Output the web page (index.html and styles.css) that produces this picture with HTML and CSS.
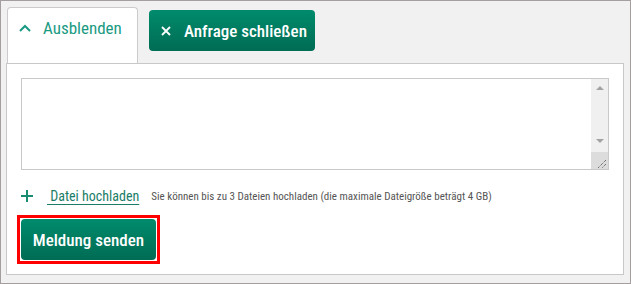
FILE: index.html
```html
<!DOCTYPE html>
<html lang="de">
<head>
  <meta charset="UTF-8">
  <meta name="viewport" content="width=device-width, initial-scale=1.0">
  <title>Anfrage</title>
  <link rel="stylesheet" href="styles.css">
</head>
<body>
  <div class="frame">
    <div class="tabs">
      <div class="tab">
        <svg class="caret" width="12" height="8" viewBox="0 0 12 8">
          <path d="M1 7 L6 2 L11 7" fill="none" stroke="currentColor" stroke-width="2"/>
        </svg>
        <span>Ausblenden</span>
      </div>
      <button class="btn btn-close" type="button">
        <svg class="cross" width="10" height="10" viewBox="0 0 10 10">
          <path d="M1 1 L9 9 M9 1 L1 9" fill="none" stroke="currentColor" stroke-width="1.8"/>
        </svg>
        <span>Anfrage schließen</span>
      </button>
    </div>
    <div class="panel">
      <div class="editor">
        <textarea class="message"></textarea>
        <div class="scrollbar">
          <svg class="arrow arrow-up" width="8" height="4" viewBox="0 0 8 4"><path d="M0 4 L4 0 L8 4 Z" fill="#a3a3a3"/></svg>
          <div class="scroll-track"></div>
          <svg class="arrow arrow-down" width="8" height="4" viewBox="0 0 8 4"><path d="M0 0 L8 0 L4 4 Z" fill="#a3a3a3"/></svg>
          <div class="grip">
            <svg width="16" height="17" viewBox="0 0 16 17">
              <path d="M15 8 L7 16 M15 12 L11 16" fill="none" stroke="#444" stroke-width="1" stroke-dasharray="1 1"/>
            </svg>
          </div>
        </div>
      </div>
      <div class="upload">
        <svg class="plus" width="12" height="12" viewBox="0 0 12 12">
          <path d="M6 0 V12 M0 6 H12" fill="none" stroke="currentColor" stroke-width="2"/>
        </svg>
        <a href="#" class="upload-link">&nbsp;Datei hochladen</a>
        <span class="hint">Sie können bis zu 3 Dateien hochladen (die maximale Dateigröße beträgt 4 GB)</span>
      </div>
      <div class="focus-ring">
        <button class="btn btn-send" type="submit">Meldung senden</button>
      </div>
    </div>
  </div>
</body>
</html>
```

FILE: styles.css
```css
body {
  margin: 0;
  font-family: 'Roboto', 'Liberation Sans', sans-serif;
  font-stretch: 75%;
}

.frame {
  height: 284px;
  box-sizing: border-box;
  border: 1px solid #a59e9e;
  background: #f0f1f0;
  padding: 0 6px 0 5px;
}

.tabs {
  display: flex;
  align-items: flex-start;
}

.tab {
  display: flex;
  align-items: flex-start;
  height: 56px;
  box-sizing: border-box;
  margin: 6px 0 0 1px;
  padding: 10px 14px 0 11px;
  width: 131px;
  background: #fff;
  border: 1px solid #cbcbcb;
  border-bottom: none;
  border-radius: 4px 4px 0 0;
  color: #1a9a82;
  font-size: 17px;
  line-height: 20px;
}

.caret {
  margin: 6px 12px 0 0;
}

.btn {
  border: none;
  border-radius: 4px;
  background: linear-gradient(#008b6c, #006c54);
  color: #fff;
  font-family: inherit;
  font-stretch: 75%;
  font-size: 17px;
  font-weight: 500;
  cursor: pointer;
}

.btn-close {
  display: flex;
  align-items: center;
  margin: 9px 0 0 11px;
  width: 166px;
  height: 41px;
  padding: 0 0 0 12px;
}

.cross {
  margin-right: 13px;
}

.panel {
  background: #fff;
  border: 1px solid #c8c8c8;
  height: 212px;
  box-sizing: border-box;
  padding: 14px 14px 0 14px;
}

.editor {
  display: flex;
  width: 588px;
  height: 92px;
  box-sizing: border-box;
  border: 1px solid #c9c9c9;
}

.message {
  flex: 1;
  margin: 0;
  border: none;
  outline: none;
  resize: none;
  overflow: hidden;
}

.scrollbar {
  display: flex;
  flex-direction: column;
  align-items: center;
  width: 17px;
  background: #f0f0f0;
}

.arrow-up {
  margin-top: 7px;
}

.scroll-track {
  flex: 1;
}

.arrow-down {
  margin-bottom: 9px;
}

.grip {
  width: 17px;
  height: 17px;
  background: #dcdcdc;
}

.grip svg {
  display: block;
}

.upload {
  display: flex;
  align-items: center;
  height: 20px;
  margin-top: 16px;
}

.plus {
  color: #1a8c72;
  margin-right: 14px;
}

.upload-link {
  color: #1b7d68;
  font-size: 14px;
  text-decoration: underline;
  text-underline-offset: 3px;
}

.hint {
  margin-left: 12px;
  color: #555;
  font-size: 11px;
}

.focus-ring {
  display: inline-block;
  margin: 9px 0 0 -4px;
  padding: 1px;
  border: 3px solid #f00;
}

.btn-send {
  display: block;
  width: 135px;
  height: 41px;
  padding: 0;
}
```
